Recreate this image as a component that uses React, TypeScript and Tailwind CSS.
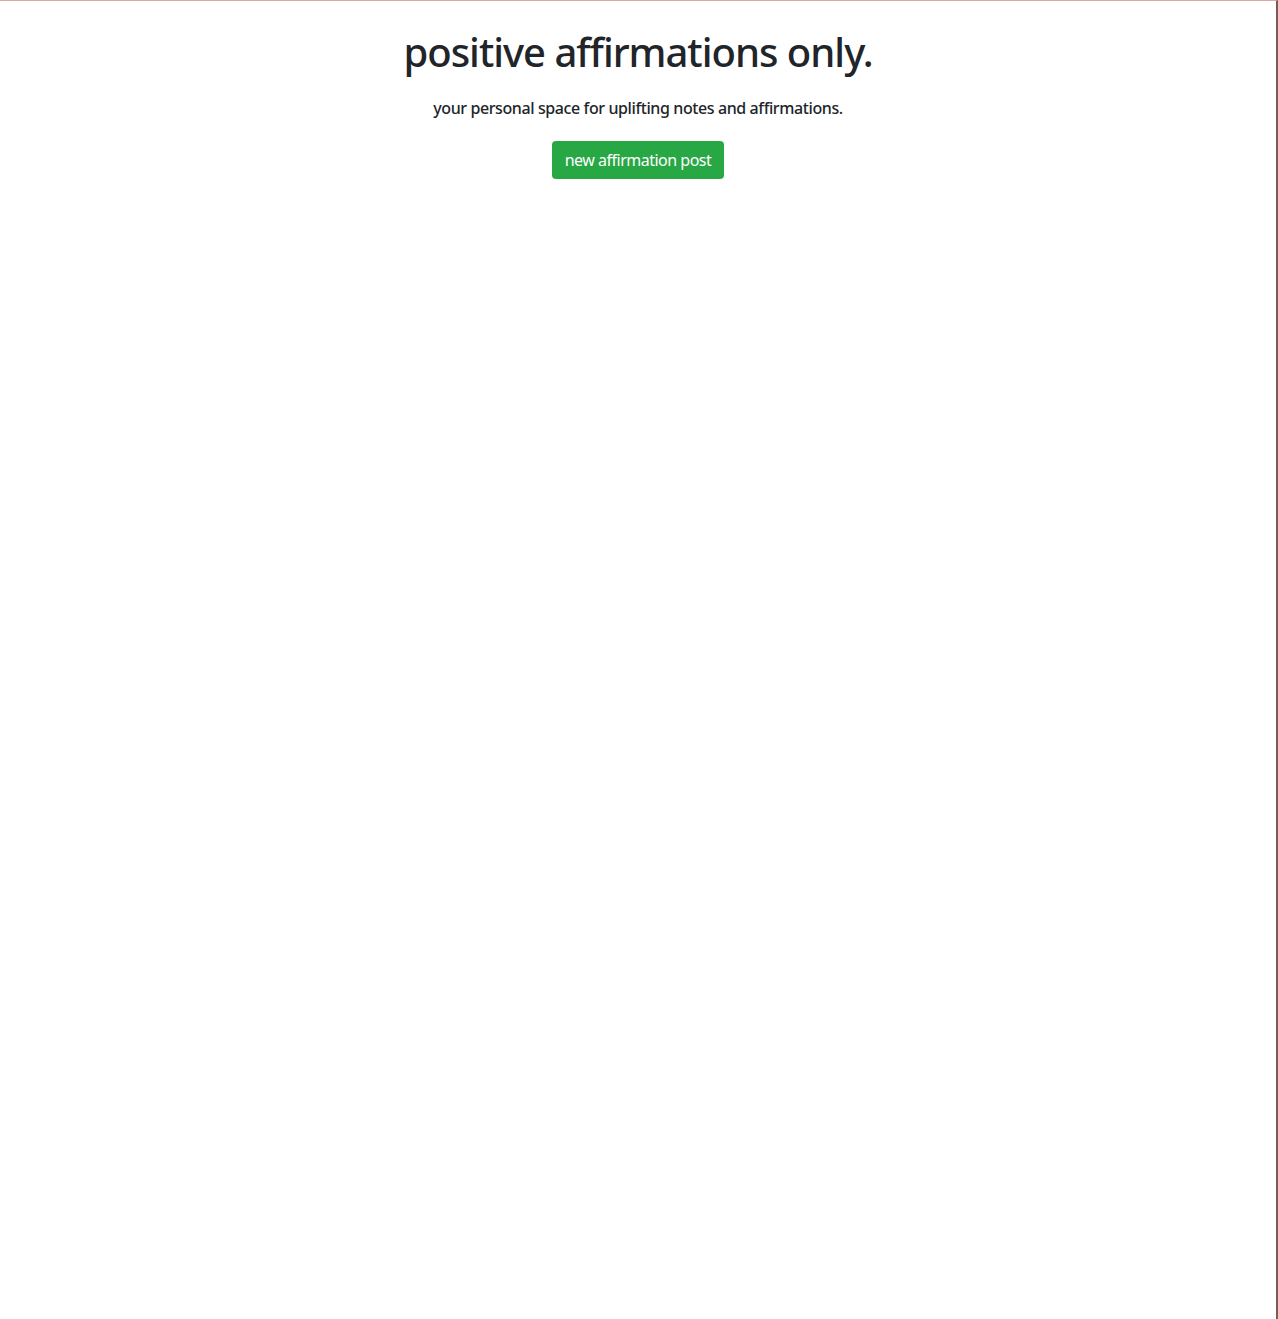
import React from 'react';

export default function App() {
  return (
    <div
      className="min-h-[1319px] bg-white border-t border-t-[#d9a8a4] border-r-2 border-r-[#7a5c50] text-[#212529]"
      style={{ fontFamily: '"Noto Sans", "Open Sans", sans-serif' }}
    >
      <div className="flex flex-col items-center text-center pt-[27px]">
        <h1 className="text-[40px] leading-[48px] font-medium tracking-[-1px]">positive affirmations only.</h1>
        <p className="mt-[20px] text-[16px] leading-[24px] font-medium tracking-[-0.4px]">
          your personal space for uplifting notes and affirmations.
        </p>
        <button className="mt-[21px] h-[38px] px-[13px] rounded-[4px] bg-[#28a745] text-white text-[16px] leading-[24px] tracking-[-0.5px]">
          new affirmation post
        </button>
      </div>
    </div>
  );
}
